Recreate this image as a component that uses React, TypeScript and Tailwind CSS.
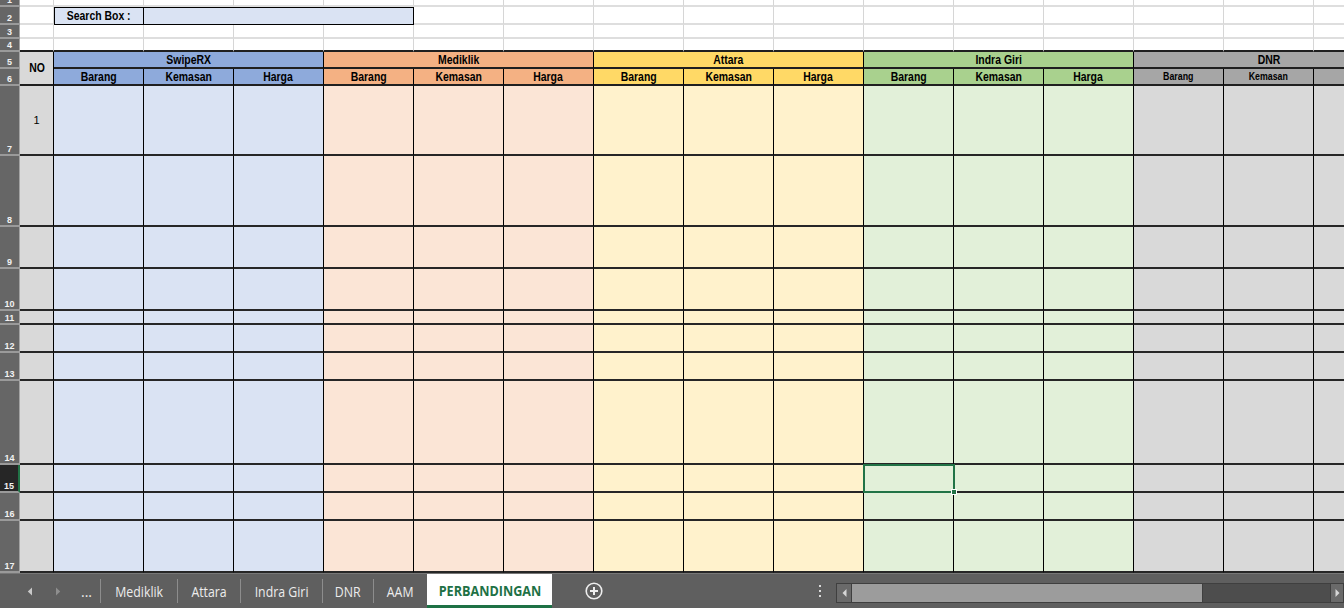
import React from "react";

type Group = { name: string; head: string; body: string; small?: boolean };

const groups: Group[] = [
  { name: "SwipeRX", head: "bg-[#8eaadb]", body: "bg-[#dae3f3]" },
  { name: "Mediklik", head: "bg-[#f4b183]", body: "bg-[#fbe5d6]" },
  { name: "Attara", head: "bg-[#ffd966]", body: "bg-[#fff2cc]" },
  { name: "Indra Giri", head: "bg-[#a9d18e]", body: "bg-[#e2f0d9]" },
  { name: "DNR", head: "bg-[#a6a6a6]", body: "bg-[#d9d9d9]", small: true },
];

const subs = ["Barang", "Kemasan", "Harga"];

function RowHead({ n, active }: { n: number; active?: boolean }) {
  return (
    <div
      className={
        active
          ? "bg-[#262626] border-r-2 border-r-[#217346] border-b-2 border-b-[#9a9a9a] flex items-end justify-center overflow-hidden"
          : "bg-[#666666] border-r border-r-[#a3a3a3] border-b-2 border-b-[#9a9a9a] flex items-end justify-center overflow-hidden"
      }
    >
      <span className="text-[9px] leading-[10px] font-bold text-[#f2f2f2]">{n}</span>
    </div>
  );
}

function Light({ last }: { last?: boolean }) {
  return (
    <div
      className={
        last
          ? "border-r border-r-[#d6d6d6] border-b-2 border-b-[#1f1f1f]"
          : "border-r border-r-[#d6d6d6] border-b-2 border-b-[#dedede]"
      }
    />
  );
}

function Narrow({ children, small }: { children: React.ReactNode; small?: boolean }) {
  return (
    <span
      className={
        small
          ? "inline-block whitespace-nowrap text-[10px] leading-[12px] font-bold scale-x-[0.88]"
          : "inline-block whitespace-nowrap text-[12px] leading-[14px] font-bold scale-x-[0.87]"
      }
    >
      {children}
    </span>
  );
}

function Sheet() {
  const cells: React.ReactNode[] = [];
  // rows 1-4
  for (let r = 1; r <= 4; r++) {
    cells.push(<RowHead key={`h${r}`} n={r} />);
    if (r === 2) {
      cells.push(<Light key="r2b" />);
      cells.push(
        <div
          key="r2label"
          className="bg-[#dae3f3] border border-black flex items-center justify-center text-black"
        >
          <Narrow>Search Box :</Narrow>
        </div>
      );
      cells.push(<div key="r2input" className="col-span-3 bg-[#dae3f3] border-y border-r border-black" />);
      for (let c = 0; c < 11; c++) cells.push(<Light key={`r2c${c}`} />);
    } else {
      for (let c = 0; c < 16; c++) cells.push(<Light key={`r${r}c${c}`} last={r === 4} />);
    }
  }
  // row 5
  cells.push(<RowHead key="h5" n={5} />);
  cells.push(
    <div
      key="no"
      className="row-span-2 bg-[#d9d9d9] border-r border-r-black border-b-2 border-b-[#1f1f1f] flex items-center justify-center text-black"
    >
      <Narrow>NO</Narrow>
    </div>
  );
  groups.forEach((g) => {
    cells.push(
      <div
        key={`g${g.name}`}
        className={`${g.head} col-span-3 border-r border-r-black border-b-2 border-b-[#1f1f1f] flex items-center justify-center text-black`}
      >
        <Narrow>{g.name}</Narrow>
      </div>
    );
  });
  // row 6
  cells.push(<RowHead key="h6" n={6} />);
  groups.forEach((g) => {
    subs.forEach((s) => {
      cells.push(
        <div
          key={`s${g.name}${s}`}
          className={`${g.head} border-r border-r-black border-b-2 border-b-[#1f1f1f] flex items-center justify-center text-black overflow-hidden`}
        >
          <Narrow small={g.small}>{s}</Narrow>
        </div>
      );
    });
  });
  // rows 7-17
  for (let r = 7; r <= 17; r++) {
    cells.push(<RowHead key={`h${r}`} n={r} active={r === 15} />);
    cells.push(
      <div
        key={`no${r}`}
        className="bg-[#d9d9d9] border-r border-r-black border-b-2 border-b-[#262626] flex items-center justify-center text-black"
      >
        {r === 7 ? <span className="text-[11px] leading-[12px]">1</span> : null}
      </div>
    );
    groups.forEach((g, gi) => {
      subs.forEach((s, si) => {
        const sel = r === 15 && gi === 3 && si === 0;
        cells.push(
          <div
            key={`b${r}${g.name}${s}`}
            className={`${g.body} relative border-r border-r-black border-b-2 border-b-[#262626]`}
          >
            {sel ? (
              <div className="absolute -left-[1px] -top-[1px] -right-[2px] -bottom-[2px] z-10 border-2 border-[#217346]">
                <div className="absolute -right-[4px] -bottom-[4px] w-[6px] h-[6px] bg-[#217346] border border-white" />
              </div>
            ) : null}
          </div>
        );
      });
    });
  }

  return (
    <div className="h-[573px] overflow-hidden">
      <div className="w-[1404px] grid grid-cols-[20px_34px_repeat(15,90px)] grid-rows-[7px_18px_14px_13px_17px_17px_70px_71px_42px_42px_14px_28px_28px_84px_28px_28px_52px]">
        {cells}
      </div>
    </div>
  );
}

function Sep() {
  return <div className="w-px h-[24px] bg-[#8d8d8d] self-center" />;
}

function Tab({ w, label }: { w: string; label: string }) {
  return (
    <div className={`${w} flex items-center justify-center`}>
      <span className="inline-block whitespace-nowrap text-[14px] scale-x-[0.88] text-[#ededed] font-['Open_Sans',sans-serif]">
        {label}
      </span>
    </div>
  );
}

function TabBar() {
  return (
    <div className="h-[35px] bg-[#5f5f5f] border-t border-t-[#777777] flex items-stretch">
      <div className="w-[100px] flex items-center pl-[27px]">
        <svg width="6" height="9" viewBox="0 0 6 9">
          <path d="M5 0.5 L0.8 4.5 L5 8.5 Z" fill="#c9c9c9" />
        </svg>
        <svg className="ml-[22px]" width="6" height="9" viewBox="0 0 6 9">
          <path d="M1 0.5 L5.2 4.5 L1 8.5 Z" fill="#8e8e8e" />
        </svg>
        <span className="ml-[20px] text-[14px] text-[#ededed] font-['Open_Sans',sans-serif] leading-none mt-[2px]">...</span>
      </div>
      <Sep />
      <Tab w="w-[76px]" label="Mediklik" />
      <Sep />
      <Tab w="w-[62px]" label="Attara" />
      <Sep />
      <Tab w="w-[81px]" label="Indra Giri" />
      <Sep />
      <Tab w="w-[50px]" label="DNR" />
      <Sep />
      <Tab w="w-[53px]" label="AAM" />
      <div className="w-[125px] bg-white border-b-[3px] border-b-[#1e7145] flex items-center justify-center pt-[2px]">
        <span className="inline-block whitespace-nowrap text-[14px] font-bold scale-x-[0.9] text-[#1e7145] font-['Open_Sans',sans-serif]">
          PERBANDINGAN
        </span>
      </div>
      <div className="w-[33px]" />
      <div className="flex items-center">
        <svg width="18" height="18" viewBox="0 0 18 18">
          <circle cx="9" cy="9" r="7.8" fill="none" stroke="#eeeeee" strokeWidth="1.6" />
          <path d="M9 5 V13 M5 9 H13" stroke="#eeeeee" strokeWidth="2" />
        </svg>
      </div>
      <div className="w-[214px]" />
      <div className="w-[6px] flex flex-col items-center justify-center gap-[3px]">
        <div className="w-[2px] h-[2px] bg-[#d9d9d9]" />
        <div className="w-[2px] h-[2px] bg-[#d9d9d9]" />
        <div className="w-[2px] h-[2px] bg-[#d9d9d9]" />
      </div>
      <div className="w-[13px]" />
      <div className="flex-1 self-start mt-[9px] h-[20px] flex bg-[#4d4d4d] border border-[#3f3f3f]">
        <div className="w-[15px] bg-[#6a6a6a] border-r border-r-[#3f3f3f] flex items-center justify-center">
          <svg width="5" height="8" viewBox="0 0 5 8">
            <path d="M4.5 0 L0.5 4 L4.5 8 Z" fill="#d6d6d6" />
          </svg>
        </div>
        <div className="w-[351px] bg-[#9c9c9c] border-r border-r-[#3f3f3f]" />
        <div className="flex-1" />
        <div className="w-[13px] bg-[#6a6a6a] border-l border-l-[#3f3f3f] flex items-center justify-center">
          <svg width="5" height="8" viewBox="0 0 5 8">
            <path d="M0.5 0 L4.5 4 L0.5 8 Z" fill="#d6d6d6" />
          </svg>
        </div>
      </div>
    </div>
  );
}

export default function App() {
  return (
    <div className="w-[1344px] h-[608px] overflow-hidden bg-white flex flex-col font-['Liberation_Sans',Arial,sans-serif]">
      <Sheet />
      <TabBar />
    </div>
  );
}
